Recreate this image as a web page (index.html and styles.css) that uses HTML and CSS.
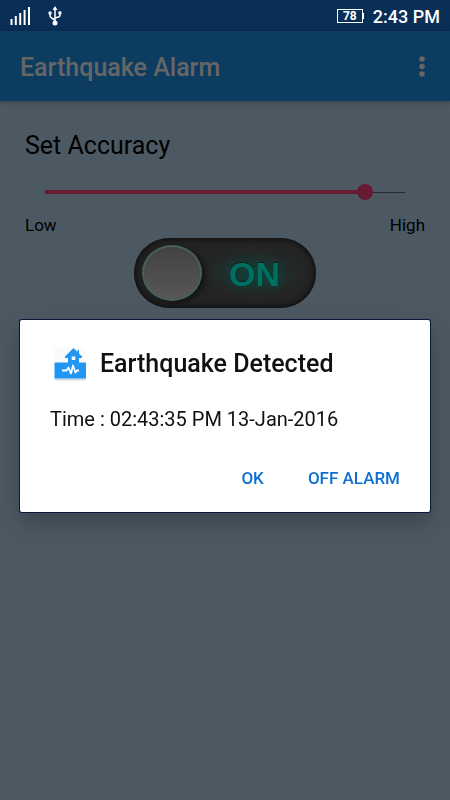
FILE: index.html
```html
<!DOCTYPE html>
<html lang="en">
<head>
<meta charset="utf-8">
<meta name="viewport" content="width=device-width, initial-scale=1">
<title>Earthquake Alarm</title>
<link rel="stylesheet" href="styles.css">
</head>
<body>
<div class="status-bar">
  <svg class="signal" width="22" height="20" viewBox="0 0 22 20" aria-hidden="true">
    <path d="M1.500 19v-6M5.800 19v-9M10.200 19v-12M14.600 19v-15M19 19V1" stroke="#fff" stroke-width="2" fill="none"/>
  </svg>
  <svg class="usb" width="14" height="20" viewBox="0 0 14 20" aria-hidden="true">
    <path d="M7 17V3M2 7v2.500Q2 11 3.500 12L7 14M12 7v2Q12 10.500 10.500 11L7 12" fill="none" stroke="#fff" stroke-width="1.500"/>
    <path d="M7 0l2.500 4h-5z" fill="#fff"/>
    <circle cx="7" cy="17" r="2.500" fill="#fff"/>
    <circle cx="2" cy="7" r="1.700" fill="#fff"/>
    <path d="M10.400 5.400h3v3h-3z" fill="#fff"/>
  </svg>
  <div class="battery">78</div>
  <time class="clock">2:43 PM</time>
</div>
<header class="app-bar">
  <h1 class="app-title">Earthquake Alarm</h1>
  <button class="menu-button" type="button" aria-label="More options">
    <svg width="6" height="22" viewBox="0 0 6 22" aria-hidden="true">
      <circle cx="3" cy="3" r="2.700"/><circle cx="3" cy="10.500" r="2.700"/><circle cx="3" cy="18" r="2.700"/>
    </svg>
  </button>
</header>
<main class="content">
  <label class="accuracy-label" for="accuracy">Set Accuracy</label>
  <input class="accuracy" id="accuracy" type="range" min="0" max="9" value="8">
  <div class="range-ends"><span>Low</span><span>High</span></div>
  <button class="power" type="button" role="switch" aria-checked="true">
    <span class="knob"></span>
    <span class="power-text">ON</span>
  </button>
</main>
<div class="overlay">
  <section class="dialog" role="dialog" aria-labelledby="dialog-title">
    <div class="dialog-head">
      <svg class="app-icon" width="34" height="34" viewBox="0 0 34 34" aria-hidden="true">
        <rect x="1" y="1" width="32" height="32" rx="2" fill="#fafafa"/>
        <path d="M2 32.500h30" stroke="#d5dce2" stroke-width="2"/>
        <path d="M1.500 15.500H15V11h-3v-1.500L20.500 1l4 4V3H26v3.500l3 3V11h-3v4.500h7V31.500H1.500z" fill="#2196f3"/>
        <path d="M18.700 9.500h3.600V13h-3.600z" fill="#fff"/>
        <path d="M9 23.500h4.500l2-3 2.500 6 2-8 2.500 7 1.500-2H26" fill="none" stroke="#fff" stroke-width="1.800" stroke-linejoin="round"/>
      </svg>
      <h2 class="dialog-title" id="dialog-title">Earthquake Detected</h2>
    </div>
    <p class="dialog-text">Time : 02:43:35 PM 13-Jan-2016</p>
    <div class="dialog-actions">
      <button class="action" type="button">OK</button>
      <button class="action" type="button">OFF ALARM</button>
    </div>
  </section>
</div>
</body>
</html>
```
FILE: styles.css
```css
* {
  box-sizing: border-box;
}

body {
  margin: 0;
  min-height: 100vh;
  background: #4c5963;
  color: #000;
  font-family: Roboto, "Liberation Sans", sans-serif;
}

button {
  border: 0;
  padding: 0;
  background: none;
  font-family: inherit;
}

.status-bar {
  display: flex;
  align-items: center;
  height: 31px;
  padding: 0 10px;
  background: #0a2f57;
  color: #fff;
}

.usb {
  margin-left: 16px;
}

.battery {
  position: relative;
  width: 26px;
  height: 14px;
  margin-left: auto;
  border: 1px solid #fff;
  font-size: 12px;
  font-weight: 700;
  line-height: 13px;
  text-align: center;
}

.battery::after {
  content: "";
  position: absolute;
  top: 3px;
  right: -2px;
  width: 2px;
  height: 6px;
  background: #fff;
}

.clock {
  margin-left: 10px;
  padding-top: 1px;
  font-size: 18px;
  font-weight: 500;
}

.app-bar {
  display: flex;
  align-items: center;
  justify-content: space-between;
  height: 70px;
  padding: 4px 20px 0;
  background: #0d3c61;
  box-shadow: 0 1px 5px rgba(0, 0, 0, 0.3);
}

.app-title {
  margin: 0;
  color: #666;
  font-size: 25px;
  font-weight: 500;
  line-height: 32px;
}

.menu-button {
  display: flex;
  justify-content: center;
  width: 16px;
  margin-top: -2px;
  fill: #666;
}

.content {
  display: flex;
  flex-direction: column;
  padding: 28px 25px;
}

.accuracy-label {
  font-size: 25px;
  line-height: 34px;
}

.accuracy {
  appearance: none;
  height: 16px;
  margin: 21px 12px 14px;
  background:
    linear-gradient(#661a33, #661a33) 8px center / calc((100% - 16px) * 8 / 9) 4px no-repeat,
    linear-gradient(#252b30, #252b30) center / calc(100% - 16px) 1px no-repeat;
}

.accuracy::-webkit-slider-thumb {
  appearance: none;
  width: 16px;
  height: 16px;
  border-radius: 50%;
  background: #661a33;
}

.range-ends {
  display: flex;
  justify-content: space-between;
  font-size: 17px;
  line-height: 22px;
}

.power {
  display: flex;
  align-items: center;
  align-self: center;
  width: 182px;
  height: 70px;
  margin-top: 2px;
  padding: 0 8px;
  border-radius: 35px;
  background: radial-gradient(ellipse 54px 26px at 120px 35px, #1c3933, #242424);
  box-shadow: inset 0 0 5px 2px #111;
}

.knob {
  width: 60px;
  height: 56px;
  border: 2px solid #46615d;
  border-radius: 50%;
  background: linear-gradient(#424242, #575757);
  box-shadow: 3px 2px 6px #111;
}

.power-text {
  margin-left: 27px;
  padding-top: 2px;
  color: #007062;
  font-family: "Liberation Sans", sans-serif;
  font-size: 34px;
  font-weight: 700;
  text-shadow: 0 -1px 1px #0b1f1c, 0 0 10px #084a40;
}

.overlay {
  position: fixed;
  inset: 31px 0 0;
  display: grid;
  align-items: center;
  padding: 0 20px;
}

.dialog {
  padding: 24px 30px 22px;
  border-radius: 2px;
  background: #fff;
  box-shadow: 0 0 0 1px #0a1838, 0 10px 24px rgba(0, 0, 0, 0.25);
}

.dialog-head {
  display: flex;
  align-items: center;
  gap: 13px;
  padding-left: 3px;
}

.dialog-title {
  margin: 0;
  color: #111;
  font-size: 25px;
  font-weight: 500;
  line-height: 40px;
}

.dialog-text {
  margin: 21px 0 33px;
  color: #111;
  font-size: 20px;
  line-height: 28px;
}

.dialog-actions {
  display: flex;
  justify-content: flex-end;
  gap: 44px;
}

.action {
  color: #0d6fd1;
  font-size: 17px;
  font-weight: 500;
  line-height: 24px;
}
```
